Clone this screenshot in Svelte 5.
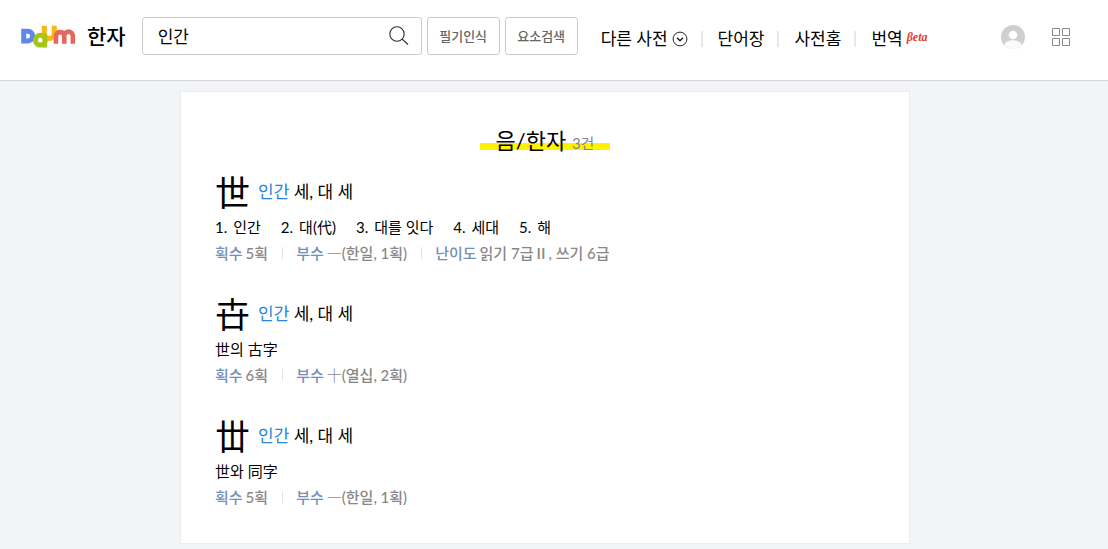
<script>
  let query = $state('인간');

  const entries = [
    {
      hanja: '世',
      meanings: [
        ['인간'],
        ['대(', '代', ')'],
        ['대를 잇다'],
        ['세대'],
        ['해']
      ],
      facts: [
        { label: '획수', value: '5획' },
        { label: '부수', radical: '一', value: '(한일, 1획)' },
        { label: '난이도', value: '읽기 7급Ⅱ, 쓰기 6급' }
      ]
    },
    {
      hanja: '卋',
      note: ['世', '의 ', '古字'],
      facts: [
        { label: '획수', value: '6획' },
        { label: '부수', radical: '十', value: '(열십, 2획)' }
      ]
    },
    {
      hanja: '丗',
      note: ['世', '와 ', '同字'],
      facts: [
        { label: '획수', value: '5획' },
        { label: '부수', radical: '一', value: '(한일, 1획)' }
      ]
    }
  ];
</script>

<header>
  <a class="logo" href="#daum" aria-label="Daum">
    <svg width="55" height="23" viewBox="0 0 55 23" fill="none">
      <path d="M23.3 .8V8.5A5 5 0 0 0 33.3 8.5V.8" stroke="#fbb612" stroke-width="5" />
      <path d="M2.7 6.2V15.9H6.8A4.85 4.85 0 0 0 6.8 6.2Z" stroke="#5f86ee" stroke-width="5" />
      <circle cx="19.3" cy="15.2" r="4.9" stroke="#a7c517" stroke-width="5" />
      <path d="M24 8.5V22.6" stroke="#a7c517" stroke-width="4.4" />
      <path d="M35 18.7V10.5A4.3 4.6 0 0 1 43.3 10.5V18.7M43.3 10.5A4.3 4.6 0 0 1 51.8 10.5V18.7" stroke="#e5685f" stroke-width="4.6" />
    </svg>
  </a>
  <a class="service" href="#hanja">한자</a>
  <form class="search" onsubmit={(e) => e.preventDefault()}>
    <input type="text" aria-label="검색어" bind:value={query} />
    <button type="submit" aria-label="검색">
      <svg width="20" height="20" viewBox="0 0 20 20" fill="none" stroke="#2b2b2b" stroke-width="1.1">
        <circle cx="8" cy="8" r="7.2" />
        <path d="M13.2 13.2L19 18.5" />
      </svg>
    </button>
  </form>
  <button class="tool" type="button">필기인식</button>
  <button class="tool" type="button">요소검색</button>
  <nav>
    <a href="#others">다른 사전<svg width="16" height="16" viewBox="0 0 16 16" fill="none" stroke="#222"><circle cx="8" cy="8" r="6.9" /><path d="M5 6.7L8 9.7L11 6.7" stroke-width="1.6" /></svg></a>
    <a href="#words">단어장</a>
    <a href="#home">사전홈</a>
    <a href="#translate">번역<em>βeta</em></a>
  </nav>
  <div class="account">
    <button type="button" aria-label="내 계정">
      <svg width="24" height="24" viewBox="0 0 24 24">
        <circle cx="12" cy="12" r="12" fill="#cfcfcf" />
        <circle cx="12" cy="10" r="4.3" fill="#fff" />
        <path d="M3.2 20.2C4 17 7.3 15.2 12 15.2S20 17 20.8 20.2A12 12 0 0 1 3.2 20.2Z" fill="#fafafa" />
      </svg>
    </button>
    <button type="button" aria-label="서비스 더보기">
      <svg width="18" height="18" viewBox="0 0 18 18" fill="none" stroke="#888">
        <path d="M.5.5h7v7h-7zM10.5.5h7v7h-7zM.5 10.5h7v7h-7zM10.5 10.5h7v7h-7z" />
      </svg>
    </button>
  </div>
</header>

<main>
  <section class="card">
    <h1><span>음/한자 <small>3건</small></span></h1>
    {#each entries as entry}
      <article>
        <h2>
          <a class="hanja" href="#entry">{entry.hanja}</a>
          <span><b>인간</b> 세, 대 세</span>
        </h2>
        {#if entry.meanings}
          <ol>
            {#each entry.meanings as parts, i}
              <li><span class="num">{i + 1}.</span>{parts[0]}{#if parts[1]}<i>{parts[1]}</i>{parts[2]}{/if}</li>
            {/each}
          </ol>
        {:else}
          <p><i>{entry.note[0]}</i>{entry.note[1]}<i>{entry.note[2]}</i></p>
        {/if}
        <dl>
          {#each entry.facts as fact}
            <div>
              <dt>{fact.label}</dt>
              <dd>{#if fact.radical}<i class="radical">{fact.radical}</i>{/if}{fact.value}</dd>
            </div>
          {/each}
        </dl>
      </article>
    {/each}
  </section>
</main>

<style>
  :global(body) {
    background: #f3f4f6;
    color: #000;
    font-family: Lato, "Noto Sans CJK KR", sans-serif;
    font-weight: 400;
  }
  header, main, header *, main * { box-sizing: border-box; }
  a { color: inherit; text-decoration: none; }
  button { font-family: inherit; padding: 0; border: 0; background: none; cursor: pointer; }
  svg { display: block; }
  i { font-style: normal; }

  header {
    display: flex;
    align-items: center;
    min-height: 81px;
    padding: 0 38px 8px 21px;
    background: #fff;
    border-bottom: 1px solid #d5d6d9;
    white-space: nowrap;
  }
  .logo { width: 55px; }
  .service { margin: 0 16px 0 11px; font-size: 21px; font-weight: 500; line-height: 32px; }
  .search {
    display: flex;
    align-items: center;
    width: 280px;
    height: 38px;
    padding-right: 12px;
    border: 1px solid #ccc;
    border-radius: 3px;
  }
  .search input {
    flex: 1;
    min-width: 0;
    padding: 0 0 0 15px;
    border: 0;
    outline: 0;
    background: none;
    color: #000;
    font: 400 17px/32px "Noto Sans CJK KR", sans-serif;
  }
  .tool {
    width: 73px;
    height: 38px;
    margin-left: 5px;
    padding-bottom: 2px;
    border: 1px solid #ccc;
    border-radius: 3px;
    color: #666;
    font-size: 13px;
    font-weight: 500;
  }
  nav { display: flex; align-items: center; padding: 5px 0 0 23px; }
  nav a { display: flex; align-items: center; font-size: 17px; line-height: 24px; }
  nav a + a::before {
    content: "";
    width: 2px;
    height: 16px;
    margin: 0 15px 0 13px;
    background: #e8e8e8;
  }
  nav svg { margin-left: 4px; }
  nav em {
    margin: 0 0 4px 4px;
    color: #e2412f;
    font: italic 700 12px/16px "Liberation Serif", serif;
  }
  .account { display: flex; align-items: center; gap: 27px; margin-left: auto; padding-top: 1px; }

  main { padding: 10px 18px 5px 0; }
  .card {
    max-width: 730px;
    margin: 0 auto;
    padding: 34px 34px 33px;
    background: #fff;
    border: 1px solid #ebecee;
  }
  h1 { margin: 0 0 16px; text-align: center; font-size: 22px; font-weight: 400; line-height: 30px; }
  h1 span {
    display: inline-block;
    padding: 0 16px;
    background: linear-gradient(#fff200, #fff200) 0 17px / 100% 7px no-repeat;
  }
  h1 small { color: #888; font-size: 15px; }
  article + article { margin-top: 30px; }
  h2 {
    display: flex;
    align-items: center;
    gap: 8px;
    margin: 0 0 4px;
    font-size: 17px;
    font-weight: 400;
    line-height: 36px;
  }
  .hanja { font-size: 35px; }
  b { color: #2786dc; font-weight: 400; }
  ol, p, dl { display: flex; margin: 0; padding: 0; font-size: 15px; line-height: 26px; list-style: none; }
  p { white-space: pre; }
  ol { gap: 20px; }
  .num { margin-right: 6px; }
  dl { color: #888; font-weight: 500; }
  dl div { display: flex; align-items: center; }
  dl div + div::before {
    content: "";
    width: 1px;
    height: 12px;
    margin: 0 13px 0 14px;
    background: #e3e3e3;
  }
  dt { color: #7590b5; }
  dd { margin: 0 0 0 3px; }
  .radical { font-weight: 300; }
</style>
